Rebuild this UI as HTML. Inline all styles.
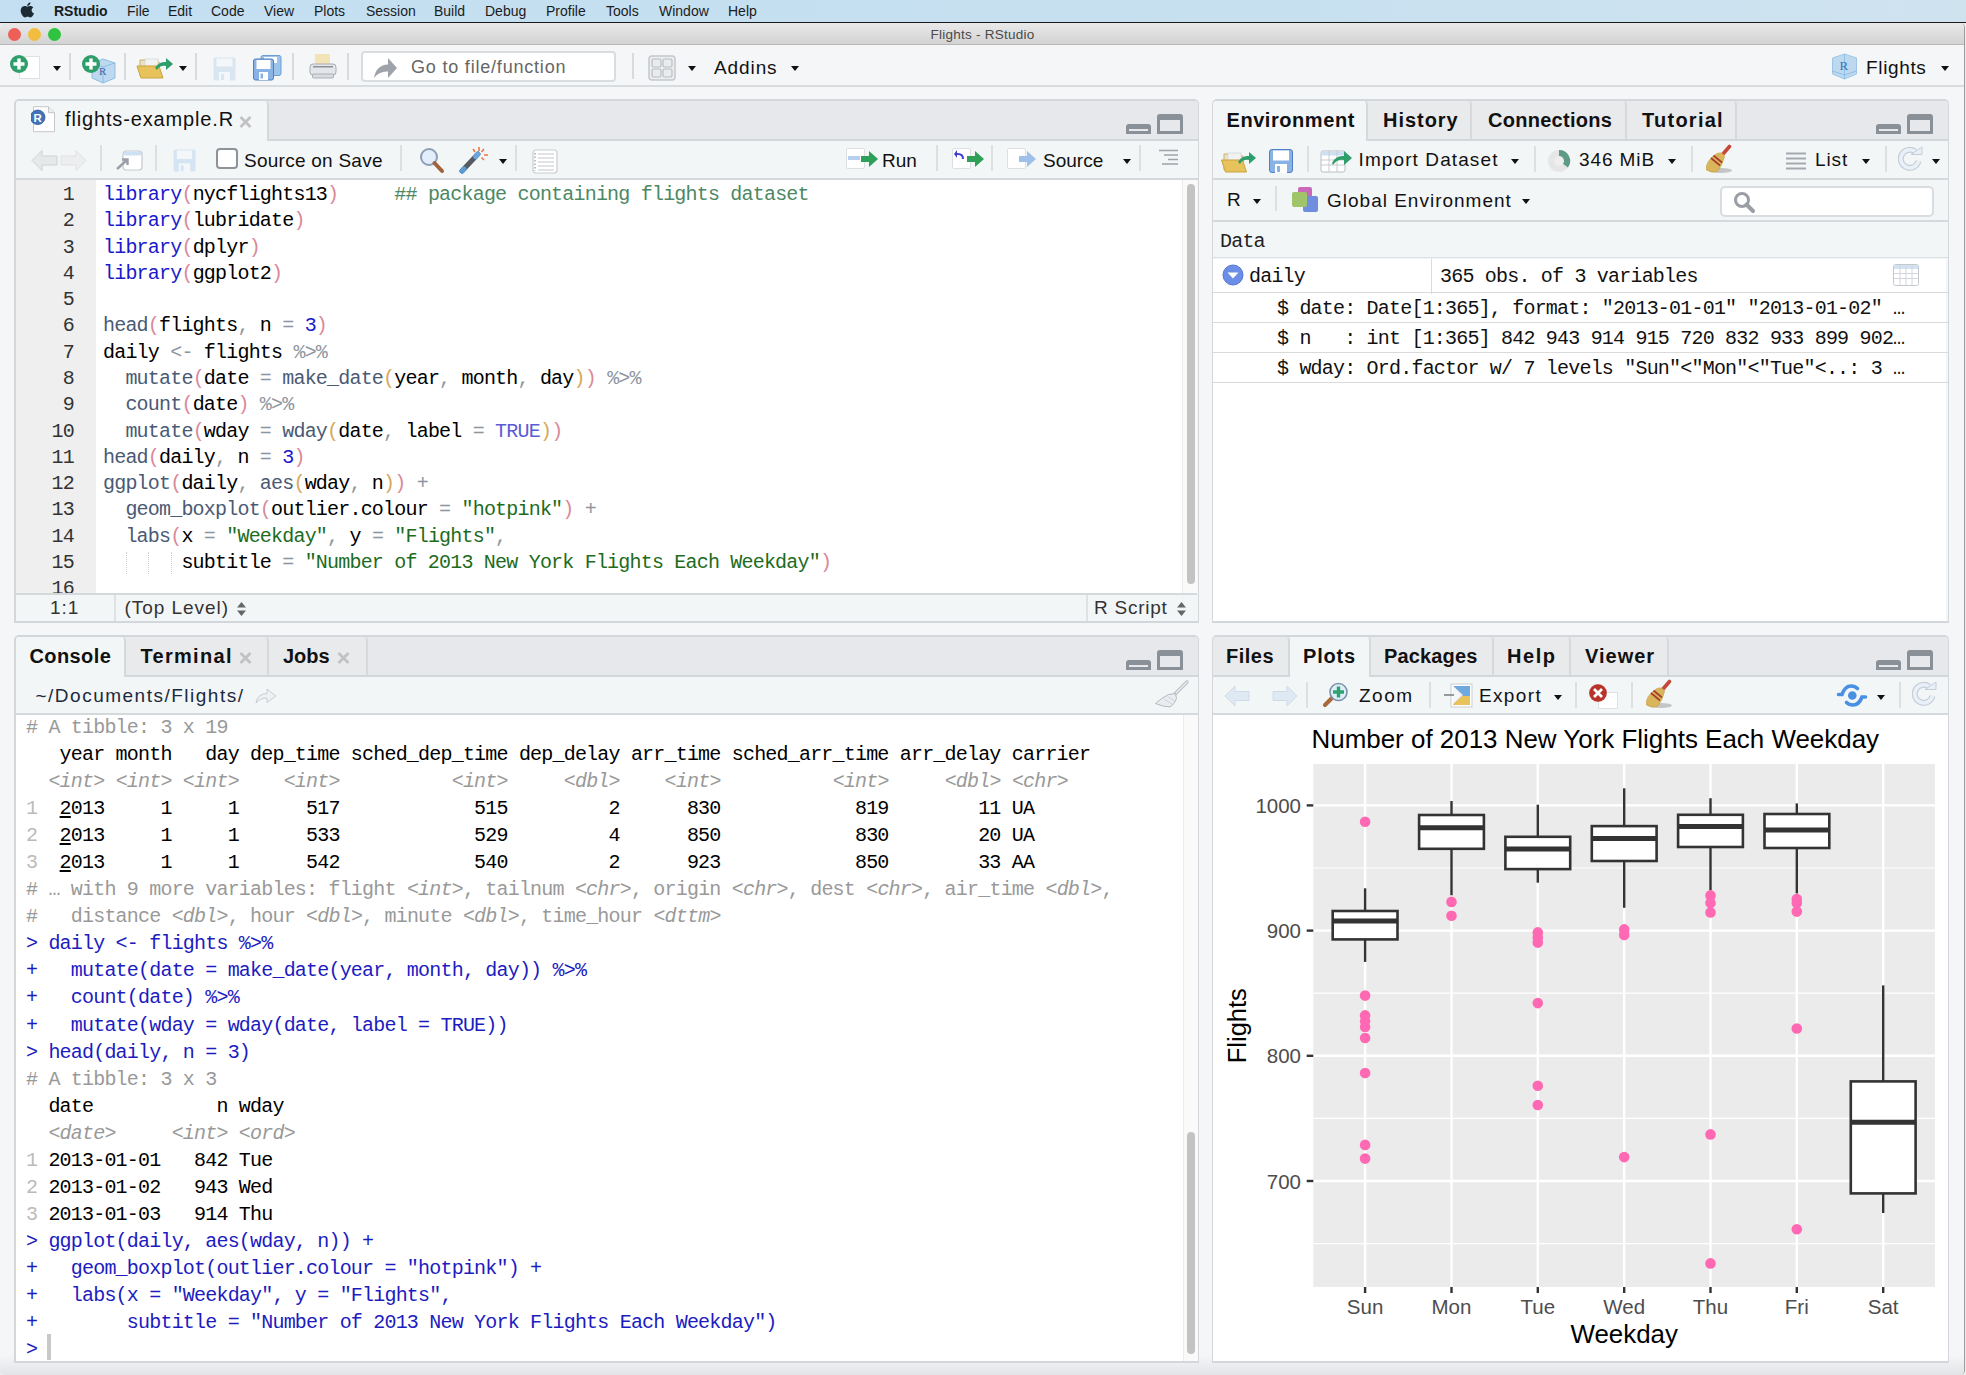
<!DOCTYPE html>
<html><head><meta charset="utf-8">
<style>
*{margin:0;padding:0;box-sizing:border-box}
html,body{width:1966px;height:1375px;overflow:hidden;background:#ececec;font-family:"Liberation Sans",sans-serif;}
.a{position:absolute}
#menubar{left:0;top:0;width:1966px;height:23px;background:linear-gradient(90deg,#c3dff1,#c6e0f0 60%,#cfe3ef);border-bottom:1px solid #1a1a1a}
#menubar span{position:absolute;top:3px;font-size:14px;color:#1b1b1b;white-space:nowrap}
#win{left:0;top:23px;width:1965px;height:1352px;background:#f5f6f8;border-radius:5px 5px 5px 5px;overflow:hidden;border-right:1px solid #9c9c9c}
#titlebar{left:0;top:0;width:1965px;height:22px;background:linear-gradient(#e9e9e9,#d3d3d3);border-bottom:1px solid #b8b8b8}
.tl{position:absolute;top:5px;width:13px;height:13px;border-radius:50%}
#toolbar{left:0;top:22px;width:1965px;height:42px;background:#f4f6f8;border-bottom:2px solid #d9dcdf}
.pane{position:absolute;border:2px solid #d3d6da;border-radius:5px 5px 0 0;background:#f3f6f7;overflow:hidden}
.tabs{position:absolute;left:0;top:0;right:0;height:39px;background:#e6e8eb;border-bottom:2px solid #d3d6da}
.tab{position:absolute;top:0;height:40px;background:#e6e8eb;border-right:2px solid #d3d6da;font-size:19px;font-weight:bold;color:#111;padding-top:8px}
.tab.act{background:#f4f6f8;height:41px;border-bottom:none}
.mono{font-family:"Liberation Mono",monospace}
.tb{position:absolute;left:0;right:0;background:#f3f6f7}
.ui{font-size:19px;color:#111;position:absolute;white-space:nowrap}
.sep{position:absolute;width:2px;height:26px;background:#dde0e3}
.dd{position:absolute;width:0;height:0;border-left:4.5px solid transparent;border-right:4.5px solid transparent;border-top:5px solid #111}
.minmax{position:absolute}

.code{position:absolute;font-family:"Liberation Mono",monospace;font-size:20px;letter-spacing:-0.8px;line-height:26.28px;white-space:pre;color:#000}
.ln{position:absolute;font-family:"Liberation Mono",monospace;font-size:20px;letter-spacing:-0.8px;line-height:26.28px;white-space:pre;color:#333;text-align:right}
.k{color:#1a1acc}.f{color:#4a5a74}.p{color:#d9899a}.p2{color:#d6a85a}.o{color:#8d96a0}.n{color:#1a1acc}.t{color:#5b5bd6}.s{color:#1d6c1d}.c{color:#4c8863}
.minb{position:absolute;width:25px;height:10px;border:3px solid #8a9097;border-top-width:5px;border-radius:3px 3px 0 0}
.maxb{position:absolute;width:26px;height:20px;border:3px solid #8a9097;border-top-width:6px;border-radius:3px 3px 0 0}

.con{position:absolute;font-family:"Liberation Mono",monospace;font-size:20px;letter-spacing:-0.8px;line-height:27.04px;white-space:pre;color:#000}
.g{color:#999}.gi{color:#999;font-style:italic}.rn{color:#bbb}.u{text-decoration:underline;text-decoration-thickness:1.5px;text-underline-offset:2px}.cm{color:#1c1cc0}
.btab{position:absolute;font-size:20px;font-weight:bold;color:#111;white-space:nowrap}
.itab{position:absolute;top:0;height:38px;background:#e9eaec;border-right:2px solid #d6d8db;border-radius:0 4px 0 0}
pre{font-family:"Liberation Mono",monospace}
</style></head><body>
<div id="menubar" class="a">
  <svg class="a" style="left:20px;top:2px" width="14" height="15.5" viewBox="0 0 14 17" preserveAspectRatio="none"><path d="M11.6 9.1c0-2 1.6-2.9 1.7-3-0.9-1.4-2.4-1.6-2.9-1.6-1.2-0.1-2.4 0.7-3 0.7-0.6 0-1.6-0.7-2.6-0.7C3.4 4.5 2.1 5.3 1.4 6.5c-1.5 2.5-0.4 6.3 1 8.4 0.7 1 1.5 2.1 2.6 2.1 1 0 1.4-0.7 2.7-0.7 1.2 0 1.6 0.7 2.7 0.6 1.1 0 1.8-1 2.5-2 0.8-1.1 1.1-2.2 1.1-2.3 0 0-2.4-0.9-2.4-3.5zM9.6 3.1c0.6-0.7 1-1.7 0.9-2.6-0.8 0-1.8 0.5-2.4 1.2-0.5 0.6-1 1.6-0.9 2.6 0.9 0.1 1.8-0.5 2.4-1.2z" fill="#1c2b33"/></svg>
  <span style="left:54px;font-weight:bold">RStudio</span>
  <span style="left:127px">File</span>
  <span style="left:168px">Edit</span>
  <span style="left:211px">Code</span>
  <span style="left:264px">View</span>
  <span style="left:314px">Plots</span>
  <span style="left:366px">Session</span>
  <span style="left:434px">Build</span>
  <span style="left:485px">Debug</span>
  <span style="left:546px">Profile</span>
  <span style="left:606px">Tools</span>
  <span style="left:659px">Window</span>
  <span style="left:728px">Help</span>
</div>
<div id="win" class="a">
  <div id="titlebar" class="a">
    <div class="tl" style="left:8px;background:#ee5f57"></div>
    <div class="tl" style="left:28px;background:#f2bd3f"></div>
    <div class="tl" style="left:48px;background:#2fc43f"></div>
    <div class="a" style="left:0;width:1965px;top:4px;text-align:center;font-size:13.5px;letter-spacing:0.25px;color:#4a4a4a">Flights - RStudio</div>
  </div>
  <div class="a" style="left:0;top:1332px;width:1965px;height:20px;background:linear-gradient(#f5f6f8,#e2e3e6)"></div>
  <div id="toolbar" class="a">
  <!-- new file -->
  <div class="a" style="left:19px;top:11px;width:21px;height:23px;background:#fff;border:1px solid #dfe2e5"></div>
  <svg class="a" style="left:9px;top:9px" width="20" height="20" viewBox="0 0 20 20"><circle cx="10" cy="10" r="9" fill="#2e9e6a"/><path d="M10 4.5v11M4.5 10h11" stroke="#fff" stroke-width="3.4"/></svg>
  <div class="dd" style="left:53px;top:43px;border-top-color:#111;top:21px"></div>
  <div class="sep" style="left:69px;top:8px;height:27px;width:2px;background:#d8dbde"></div>
  <!-- new project -->
  <svg class="a" style="left:89px;top:12px" width="28" height="28" viewBox="0 0 28 28"><path d="M3 6 L14 2 L26 6 L26 21 L14 26 L3 21Z" fill="#bcd9f0" stroke="#8fbde3" stroke-width="1"/><path d="M3 6 L14 10 L26 6 M14 10 V26" stroke="#8fbde3" fill="none" stroke-width="1"/><text x="10" y="18" font-family="Liberation Serif" font-size="11" fill="#3a66a8">R</text></svg>
  <svg class="a" style="left:81px;top:9px" width="20" height="20" viewBox="0 0 20 20"><circle cx="10" cy="10" r="9" fill="#2e9e6a"/><path d="M10 4.5v11M4.5 10h11" stroke="#fff" stroke-width="3.4"/></svg>
  <div class="sep" style="left:124px;top:8px;height:27px;background:#d8dbde"></div>
  <!-- open -->
  <svg class="a" style="left:136px;top:11px" width="38" height="24" viewBox="0 0 38 24"><path d="M4 4 h8 l2 2 h9 v14 h-19z" fill="#e9e2c9" stroke="#c9b26a" stroke-width="1"/><rect x="9" y="3" width="13" height="14" fill="#f2f2f2" stroke="#ccc" stroke-width="0.6"/><path d="M1 10 h22 l4 12 h-22z" fill="#e8c25a" stroke="#c9a33e" stroke-width="1"/><path d="M19 12 q4 -7 11 -6 v-4 l7 6 -7 6 v-4 q-6 -1 -9 4z" fill="#2e9e6a"/></svg>
  <div class="dd" style="left:179px;top:21px"></div>
  <div class="sep" style="left:195px;top:8px;height:27px;background:#d8dbde"></div>
  <!-- save (disabled) -->
  <svg class="a" style="left:213px;top:12px" width="23" height="24" viewBox="0 0 23 24"><rect x="0.5" y="0.5" width="22" height="23" rx="2" fill="#d9e6f2"/><rect x="3.5" y="1.5" width="16" height="8" fill="#f4f7fa"/><rect x="6" y="15" width="11" height="9" fill="#f4f7fa"/><rect x="8" y="17" width="3" height="6" fill="#d9e6f2"/></svg>
  <!-- save all -->
  <svg class="a" style="left:253px;top:10px" width="29" height="26" viewBox="0 0 29 26"><rect x="8" y="0.5" width="20" height="20" rx="2" fill="#9cc4ea" stroke="#6d9fd6" stroke-width="1"/><rect x="11" y="2" width="13" height="6" fill="#fff"/><rect x="0.5" y="4" width="20" height="21" rx="2" fill="#8ab3e5" stroke="#4f7fc4" stroke-width="1"/><rect x="3.5" y="5" width="14" height="9" fill="#fff"/><rect x="6" y="17" width="9" height="8" fill="#fff"/><rect x="7.5" y="18.5" width="2.5" height="5" fill="#8ab3e5"/></svg>
  <div class="sep" style="left:292px;top:8px;height:27px;background:#d8dbde"></div>
  <!-- print -->
  <svg class="a" style="left:309px;top:8px" width="28" height="26" viewBox="0 0 28 26"><rect x="6" y="1" width="15" height="12" fill="#f3e4b8"/><rect x="1" y="11" width="26" height="11" rx="3" fill="#e3e6ea" stroke="#a9adb3" stroke-width="1"/><rect x="4" y="13" width="20" height="1.5" fill="#8e9297"/><rect x="3.5" y="21" width="21" height="4" rx="1" fill="#d9dcdf" stroke="#a0a4a9" stroke-width="0.8"/></svg>
  <div class="sep" style="left:347px;top:8px;height:27px;background:#d8dbde"></div>
  <!-- go to -->
  <div class="a" style="left:361px;top:6px;width:255px;height:31px;background:#fff;border:2px solid #dadde0;border-radius:4px"></div>
  <svg class="a" style="left:374px;top:12px" width="24" height="22" viewBox="0 0 24 22"><path d="M0 21 Q2 8 14 7.5 V1 L23 11 L14 21 V14.5 Q5 14 0 21Z" fill="#9ea3ab"/></svg>
  <span class="ui" style="left:411px;top:12px;font-size:18px;color:#666;letter-spacing:0.8px">Go to file/function</span>
  <div class="sep" style="left:632px;top:8px;height:26px;background:#d8dbde"></div>
  <!-- layout -->
  <svg class="a" style="left:648px;top:10px" width="28" height="26" viewBox="0 0 28 26"><rect x="1" y="1" width="26" height="24" rx="3" fill="#eceef0" stroke="#c4c8cc" stroke-width="1.5"/><rect x="4" y="4" width="9" height="8" rx="1.5" fill="#e9ebed" stroke="#b9bdc2" stroke-width="1.2"/><rect x="15" y="4" width="9" height="8" rx="1.5" fill="#e9ebed" stroke="#b9bdc2" stroke-width="1.2"/><rect x="4" y="14" width="9" height="8" rx="1.5" fill="#e9ebed" stroke="#b9bdc2" stroke-width="1.2"/><rect x="15" y="14" width="9" height="8" rx="1.5" fill="#e9ebed" stroke="#b9bdc2" stroke-width="1.2"/></svg>
  <div class="dd" style="left:688px;top:21px"></div>
  <span class="ui" style="left:714px;top:12px;font-size:19px;letter-spacing:0.9px">Addins</span>
  <div class="dd" style="left:791px;top:21px"></div>
  <!-- project -->
  <svg class="a" style="left:1831px;top:8px" width="27" height="27" viewBox="0 0 27 27"><path d="M1.5 5 L13.5 1 L25.5 5 V21 L13.5 26 L1.5 21Z" fill="#bcd9f0" stroke="#9cc5e8" stroke-width="1"/><path d="M1.5 18 L13.5 22 L25.5 18 M13.5 1 V26" stroke="#7fb3e0" fill="none" stroke-width="0.7"/><text x="8.5" y="17" font-family="Liberation Serif" font-size="13" fill="#3a70b5">R</text></svg>
  <span class="ui" style="left:1866px;top:12px;font-size:19px;letter-spacing:0.65px">Flights</span>
  <div class="dd" style="left:1941px;top:21px"></div>
  </div>
</div>

<!-- SOURCE PANE -->
<div class="pane" style="left:14px;top:99px;width:1185px;height:524px;border-right-width:1px">
  <div class="tabs" style="height:40px"></div>
  <div class="a" style="left:0;top:0;width:253px;height:40px;background:#f3f6f7;border-right:2px solid #d6d8db;border-radius:0 4px 0 0"></div>
  <svg class="a" style="left:15px;top:5px" width="28" height="28" viewBox="0 0 28 28"><path d="M2.5 0.7h15l6 6v19h-21z" fill="#fff" stroke="#c6c6c6" stroke-width="1"/><path d="M17.5 0.7v6h6" fill="#eee" stroke="#c6c6c6" stroke-width="1"/><circle cx="6.7" cy="11.3" r="7.3" fill="#4372b8" stroke="#2f5c9e" stroke-width="0.8"/><text x="2.6" y="15.6" font-family="Liberation Sans" font-weight="bold" font-size="11.5" fill="#fff">R</text></svg>
  <span class="ui" style="left:49px;top:7px;font-size:20px;letter-spacing:0.85px">flights-example.R</span>
  <svg class="a" style="left:223px;top:15px" width="13" height="12" viewBox="0 0 13 12"><path d="M1.5 1L11.5 11M11.5 1L1.5 11" stroke="#c2c2c2" stroke-width="2.8"/></svg>
  <div class="minb" style="left:1110px;top:23px;width:25px;height:10px"></div>
  <div class="maxb" style="left:1141px;top:13px;width:26px;height:20px"></div>
  <!-- toolbar -->
  <div class="tb" style="top:41px;height:38px;border-bottom:2px solid #d6d9dc"></div>
  <svg class="a" style="left:15px;top:48px" width="56" height="23" viewBox="0 0 56 23"><path d="M1 11.5 L11 1.5 V7 H26 V16 H11 V21.5Z" fill="#e6e8ea" stroke="#cfd2d5" stroke-width="1"/><path d="M55 11.5 L45 1.5 V7 H30 V16 H45 V21.5Z" fill="#eceef0" stroke="#dfe1e3" stroke-width="1"/></svg>
  <div class="sep" style="left:84px;top:44px;height:26px"></div>
  <svg class="a" style="left:99px;top:49px" width="28" height="21" viewBox="0 0 28 21"><rect x="8" y="1" width="19" height="19" rx="3" fill="#fff" stroke="#c5c9cd" stroke-width="1.2"/><rect x="8.6" y="1.6" width="17.8" height="4" rx="2" fill="#cfe0f3"/><path d="M2 19 L12 10 M7 9.5 H12.5 V15" stroke="#9aa0a6" stroke-width="2.4" fill="none"/></svg>
  <div class="sep" style="left:139px;top:44px;height:26px"></div>
  <svg class="a" style="left:157px;top:48px" width="23" height="23" viewBox="0 0 24 24"><rect x="0.5" y="0.5" width="23" height="23" rx="2" fill="#d5e4f2"/><rect x="4" y="1.5" width="16" height="9" fill="#f4f7fa"/><rect x="6" y="15" width="12" height="9" fill="#f4f7fa"/><rect x="8" y="17" width="3" height="6" fill="#d5e4f2"/></svg>
  <div class="a" style="left:200px;top:47px;width:22px;height:21px;border:2px solid #8e9399;border-radius:4px;background:#fff"></div>
  <span class="ui" style="left:228px;top:49px;font-size:19px;letter-spacing:0.25px">Source on Save</span>
  <div class="sep" style="left:384px;top:44px;height:26px"></div>
  <svg class="a" style="left:403px;top:46px" width="26" height="27" viewBox="0 0 26 27"><circle cx="10" cy="10" r="8" fill="#e3eefb" stroke="#8c9fb5" stroke-width="2"/><path d="M15.5 16 L23 24" stroke="#a0623a" stroke-width="4" stroke-linecap="round"/></svg>
  <svg class="a" style="left:443px;top:44px" width="33" height="29" viewBox="0 0 33 29"><path d="M3 26 L19 9" stroke="#555b62" stroke-width="5" stroke-linecap="round"/><path d="M16.5 11.5 L19 9" stroke="#6aa6de" stroke-width="5" stroke-linecap="round"/><path d="M3 26 L5 24" stroke="#5b9bd6" stroke-width="5" stroke-linecap="round"/><path d="M20 2v4M25 4l-2.5 3M29 10h-4M25 15l-2.5-2.5M14 4l2 3" stroke="#e8774a" stroke-width="1.6"/></svg>
  <div class="dd" style="left:483px;top:58px"></div>
  <div class="sep" style="left:499px;top:44px;height:26px"></div>
  <svg class="a" style="left:516px;top:48px" width="26" height="25" viewBox="0 0 26 25"><rect x="1" y="1" width="24" height="23" rx="3" fill="#fff" stroke="#c9ccd0" stroke-width="1.2"/><path d="M6 5h16M6 9h16M6 13h16M6 17h16M6 21h16" stroke="#c2c6cb" stroke-width="1"/><path d="M3 4v18" stroke="#a9aeb4" stroke-width="1.5" stroke-dasharray="1.5 2"/></svg>
  <!-- Run -->
  <div class="a" style="left:830px;top:47px;width:19px;height:21px;background:#fff;border:1px solid #dde0e3;border-radius:2px"></div>
  <div class="a" style="left:832px;top:55px;width:12px;height:4px;background:#b8cff0"></div>
  <svg class="a" style="left:845px;top:50px" width="18" height="16" viewBox="0 0 18 16"><path d="M0 5H8V0L17 8L8 16V11H0Z" fill="#2ea05a"/></svg>
  <span class="ui" style="left:866px;top:49px;font-size:19px">Run</span>
  <div class="sep" style="left:920px;top:44px;height:26px"></div>
  <div class="a" style="left:936px;top:47px;width:19px;height:21px;background:#fff;border:1px solid #dde0e3;border-radius:2px"></div>
  <svg class="a" style="left:938px;top:48px" width="12" height="12" viewBox="0 0 12 12"><path d="M10 10 Q10 4 4 4 H3 V1 L0 5 L3 9 V6 H4 Q8 6 8 10Z" fill="#3f3fcf"/></svg>
  <svg class="a" style="left:951px;top:50px" width="18" height="16" viewBox="0 0 18 16"><path d="M0 5H8V0L17 8L8 16V11H0Z" fill="#2ea05a"/></svg>
  <div class="sep" style="left:975px;top:44px;height:26px"></div>
  <div class="a" style="left:991px;top:47px;width:19px;height:21px;background:#fff;border:1px solid #dde0e3;border-radius:2px"></div>
  <svg class="a" style="left:1003px;top:50px" width="18" height="16" viewBox="0 0 18 16"><path d="M0 5H8V0L17 8L8 16V11H0Z" fill="#9fc0ea"/></svg>
  <span class="ui" style="left:1027px;top:49px;font-size:19px">Source</span>
  <div class="dd" style="left:1107px;top:58px"></div>
  <div class="sep" style="left:1123px;top:44px;height:26px"></div>
  <svg class="a" style="left:1143px;top:48px" width="20" height="18" viewBox="0 0 20 18"><path d="M0 1.5H19M5 6H19M9 10.5H19M3 15H19" stroke="#9ea3a9" stroke-width="1.6"/></svg>
  <!-- editor -->
  <div class="a" style="left:0;top:79px;width:1181px;height:413px;background:#fff"></div>
  <div class="a" style="left:0;top:79px;width:80px;height:413px;background:#efefef"></div>
  <div class="ln" style="left:0;top:81px;width:58px">1
2
3
4
5
6
7
8
9
10
11
12
13
14
15
16</div>
  <div class="code" style="left:87px;top:81px"><span class="k">library</span><span class="p">(</span>nycflights13<span class="p">)</span>     <span class="c">## package containing flights dataset</span>
<span class="k">library</span><span class="p">(</span>lubridate<span class="p">)</span>
<span class="k">library</span><span class="p">(</span>dplyr<span class="p">)</span>
<span class="k">library</span><span class="p">(</span>ggplot2<span class="p">)</span>

<span class="f">head</span><span class="p">(</span>flights<span class="o">,</span> n <span class="o">=</span> <span class="n">3</span><span class="p">)</span>
daily <span class="o">&lt;-</span> flights <span class="o">%&gt;%</span>
  <span class="f">mutate</span><span class="p">(</span>date <span class="o">=</span> <span class="f">make_date</span><span class="p2">(</span>year<span class="o">,</span> month<span class="o">,</span> day<span class="p2">)</span><span class="p">)</span> <span class="o">%&gt;%</span>
  <span class="f">count</span><span class="p">(</span>date<span class="p">)</span> <span class="o">%&gt;%</span>
  <span class="f">mutate</span><span class="p">(</span>wday <span class="o">=</span> <span class="f">wday</span><span class="p2">(</span>date<span class="o">,</span> label <span class="o">=</span> <span class="t">TRUE</span><span class="p2">)</span><span class="p">)</span>
<span class="f">head</span><span class="p">(</span>daily<span class="o">,</span> n <span class="o">=</span> <span class="n">3</span><span class="p">)</span>
<span class="f">ggplot</span><span class="p">(</span>daily<span class="o">,</span> <span class="f">aes</span><span class="p2">(</span>wday<span class="o">,</span> n<span class="p2">)</span><span class="p">)</span> <span class="o">+</span>
  <span class="f">geom_boxplot</span><span class="p">(</span>outlier.colour <span class="o">=</span> <span class="s">"hotpink"</span><span class="p">)</span> <span class="o">+</span>
  <span class="f">labs</span><span class="p">(</span>x <span class="o">=</span> <span class="s">"Weekday"</span><span class="o">,</span> y <span class="o">=</span> <span class="s">"Flights"</span><span class="o">,</span>
       subtitle <span class="o">=</span> <span class="s">"Number of 2013 New York Flights Each Weekday"</span><span class="p">)</span>
</div>
  <div class="a" style="left:110px;top:451px;height:22px;border-left:1px dotted #d0d0d0"></div>
  <div class="a" style="left:132px;top:451px;height:22px;border-left:1px dotted #d0d0d0"></div>
  <div class="a" style="left:155px;top:451px;height:22px;border-left:1px dotted #d0d0d0"></div>
  <!-- scrollbar -->
  <div class="a" style="left:1166px;top:79px;width:15px;height:414px;background:#fafafa;border-left:1px solid #ececec"></div>
  <div class="a" style="left:1171px;top:83px;width:8px;height:400px;background:#c3c3c3;border-radius:4px"></div>
  <!-- status -->
  <div class="a" style="left:0;top:492px;width:1181px;height:2px;background:#d6d9dc"></div>
  <span class="ui" style="left:34px;top:496px;font-size:19px;color:#333;letter-spacing:0.9px">1:1</span>
  <div class="a" style="left:98px;top:494px;width:2px;height:28px;background:#dfe2e5"></div>
  <span class="ui" style="left:108.5px;top:496px;font-size:19px;color:#333;letter-spacing:0.95px">(Top Level)</span>
  <svg class="a" style="left:220px;top:500px" width="11" height="16" viewBox="0 0 11 16"><path d="M1 6.5L5.5 1L10 6.5ZM1 9.5L5.5 15L10 9.5Z" fill="#666"/></svg>
  <div class="a" style="left:1070px;top:494px;width:2px;height:28px;background:#dfe2e5"></div>
  <span class="ui" style="left:1078px;top:496px;font-size:19px;color:#333;letter-spacing:0.75px">R Script</span>
  <svg class="a" style="left:1160px;top:500px" width="11" height="16" viewBox="0 0 11 16"><path d="M1 6.5L5.5 1L10 6.5ZM1 9.5L5.5 15L10 9.5Z" fill="#666"/></svg>
</div>
<!-- CONSOLE PANE -->
<div class="pane" style="left:14px;top:635px;width:1185px;height:728px;border-right-width:1px">
  <div class="tabs" style="height:40px"></div>
  <div class="a" style="left:0;top:0;width:110px;height:40px;background:#f3f6f7;border-right:2px solid #d6d8db;border-radius:0 4px 0 0"></div>
  <div class="itab" style="left:110px;width:143px"></div>
  <div class="itab" style="left:253px;width:99px"></div>
  <span class="btab" style="left:13.5px;top:8px;letter-spacing:0.4px">Console</span>
  <span class="btab" style="left:124.5px;top:8px;letter-spacing:1.3px">Terminal</span>
  <svg class="a" style="left:223px;top:15px" width="13" height="12" viewBox="0 0 13 12"><path d="M1.5 1L11.5 11M11.5 1L1.5 11" stroke="#c2c2c2" stroke-width="2.8"/></svg>
  <span class="btab" style="left:267px;top:8px;letter-spacing:0px">Jobs</span>
  <svg class="a" style="left:321px;top:15px" width="13" height="12" viewBox="0 0 13 12"><path d="M1.5 1L11.5 11M11.5 1L1.5 11" stroke="#c2c2c2" stroke-width="2.8"/></svg>
  <div class="minb" style="left:1110px;top:23px;width:25px;height:10px"></div>
  <div class="maxb" style="left:1141px;top:13px;width:26px;height:20px"></div>
  <!-- path bar -->
  <span class="ui" style="left:19.5px;top:48px;font-size:19px;color:#1b2a3e;letter-spacing:1.5px">~/Documents/Flights/</span>
  <svg class="a" style="left:239px;top:51px" width="22" height="16" viewBox="0 0 22 16"><path d="M1 15 Q2 6 12 5.5 V1 L21 8 L12 14.5 V10 Q5 10 1 15Z" fill="#eef0f3" stroke="#c8cdd3" stroke-width="1"/></svg>
  <svg class="a" style="left:1134px;top:41px" width="40" height="32" viewBox="0 0 40 32"><path d="M37 4 L25.5 15.5" stroke="#b3b8be" stroke-width="3.2" stroke-linecap="round"/><path d="M37 4 L25.5 15.5" stroke="#f1f3f6" stroke-width="1.3" stroke-linecap="round"/><path d="M18.5 16.5 L25.5 15.5 L26.5 20.5 Q24.5 26.5 20 29 Q12 28.5 5.5 25.5 Q12 19.5 18.5 16.5Z" fill="#e9ecf0" stroke="#aeb3b9" stroke-width="0.9"/><path d="M14 21 L22 26 M17.5 18.5 L24.5 23" stroke="#c9cdd2" stroke-width="0.8"/></svg>
  <div class="a" style="left:0;top:76px;width:1182px;height:2px;background:#d6d9dc"></div>
  <!-- body -->
  <div class="a" style="left:0;top:78px;width:1182px;height:648px;background:#fff"></div>
  <div class="con" style="left:10px;top:77px"><span class="g"># A tibble: 3 x 19</span>
   year month   day dep_time sched_dep_time dep_delay arr_time sched_arr_time arr_delay carrier
  <span class="gi">&lt;int&gt;</span> <span class="gi">&lt;int&gt;</span> <span class="gi">&lt;int&gt;</span>    <span class="gi">&lt;int&gt;</span>          <span class="gi">&lt;int&gt;</span>     <span class="gi">&lt;dbl&gt;</span>    <span class="gi">&lt;int&gt;</span>          <span class="gi">&lt;int&gt;</span>     <span class="gi">&lt;dbl&gt;</span> <span class="gi">&lt;chr&gt;</span>
<span class="rn">1</span>  <span class="u">2</span>013     1     1      517            515         2      830            819        11 UA
<span class="rn">2</span>  <span class="u">2</span>013     1     1      533            529         4      850            830        20 UA
<span class="rn">3</span>  <span class="u">2</span>013     1     1      542            540         2      923            850        33 AA
<span class="g"># … with 9 more variables: flight <i>&lt;int&gt;</i>, tailnum <i>&lt;chr&gt;</i>, origin <i>&lt;chr&gt;</i>, dest <i>&lt;chr&gt;</i>, air_time <i>&lt;dbl&gt;</i>,</span>
<span class="g">#   distance <i>&lt;dbl&gt;</i>, hour <i>&lt;dbl&gt;</i>, minute <i>&lt;dbl&gt;</i>, time_hour <i>&lt;dttm&gt;</i></span>
<span class="cm">&gt; daily &lt;- flights %&gt;%</span>
<span class="cm">+   mutate(date = make_date(year, month, day)) %&gt;%</span>
<span class="cm">+   count(date) %&gt;%</span>
<span class="cm">+   mutate(wday = wday(date, label = TRUE))</span>
<span class="cm">&gt; head(daily, n = 3)</span>
<span class="g"># A tibble: 3 x 3</span>
  date           n wday
  <span class="gi">&lt;date&gt;</span>     <span class="gi">&lt;int&gt;</span> <span class="gi">&lt;ord&gt;</span>
<span class="rn">1</span> 2013-01-01   842 Tue
<span class="rn">2</span> 2013-01-02   943 Wed
<span class="rn">3</span> 2013-01-03   914 Thu
<span class="cm">&gt; ggplot(daily, aes(wday, n)) +</span>
<span class="cm">+   geom_boxplot(outlier.colour = "hotpink") +</span>
<span class="cm">+   labs(x = "Weekday", y = "Flights",</span>
<span class="cm">+        subtitle = "Number of 2013 New York Flights Each Weekday")</span>
<span class="cm">&gt; </span></div>
  <div class="a" style="left:31px;top:697px;width:4px;height:26px;background:#c8c8c8"></div>
  <!-- scrollbar -->
  <div class="a" style="left:1167px;top:78px;width:15px;height:648px;background:#fafafa;border-left:1px solid #ececec"></div>
  <div class="a" style="left:1171px;top:495px;width:8px;height:222px;background:#c3c3c3;border-radius:4px"></div>
</div>
<!-- ENV PANE -->
<div class="pane" style="left:1212px;top:99px;width:737px;height:524px;border-left-width:1px;border-right-width:1px">
  <div class="tabs" style="height:40px"></div>
  <div class="a" style="left:0;top:0;width:155px;height:40px;background:#f3f6f7;border-right:2px solid #d6d8db;border-radius:0 4px 0 0"></div>
  <div class="itab" style="left:155px;width:104px"></div>
  <div class="itab" style="left:259px;width:155px"></div>
  <div class="itab" style="left:414px;width:110px"></div>
  <span class="btab" style="left:13.5px;top:8px;letter-spacing:0.56px">Environment</span>
  <span class="btab" style="left:170px;top:8px;letter-spacing:0.97px">History</span>
  <span class="btab" style="left:275px;top:8px;letter-spacing:0.27px">Connections</span>
  <span class="btab" style="left:429px;top:8px;letter-spacing:1.26px">Tutorial</span>
  <div class="minb" style="left:663px;top:23px;width:25px;height:10px"></div>
  <div class="maxb" style="left:694px;top:13px;width:26px;height:20px"></div>
  <!-- toolbar 1 -->
  <div class="tb" style="top:40px;height:39px;border-bottom:2px solid #d6d9dc"></div>
  <svg class="a" style="left:8px;top:49px" width="36" height="24" viewBox="0 0 36 24"><path d="M3 4 h8 l2 2 h9 v14 h-19z" fill="#e9e2c9" stroke="#c9b26a" stroke-width="1"/><rect x="7" y="3" width="13" height="14" fill="#f2f2f2" stroke="#ccc" stroke-width="0.6"/><path d="M0.5 10 h21 l4 12 h-21z" fill="#e8c25a" stroke="#c9a33e" stroke-width="1"/><path d="M17 12 q4 -7 11 -6 v-4 l7 6 -7 6 v-4 q-6 -1 -9 4z" fill="#2e9e6a"/></svg>
  <svg class="a" style="left:56px;top:48px" width="24" height="24" viewBox="0 0 24 24"><rect x="0.5" y="0.5" width="23" height="23" rx="2.5" fill="#8ab3e5" stroke="#4f7fc4" stroke-width="1"/><rect x="4" y="1.5" width="16" height="10" fill="#fff"/><rect x="6" y="15" width="12" height="9" fill="#fff"/><rect x="8" y="17" width="3" height="6" fill="#8ab3e5"/></svg>
  <div class="sep" style="left:94px;top:45px;height:26px"></div>
  <svg class="a" style="left:107px;top:47px" width="36" height="25" viewBox="0 0 36 25"><rect x="1" y="3" width="24" height="21" rx="2" fill="#fff" stroke="#b9bec4" stroke-width="1"/><rect x="1.5" y="3.5" width="23" height="4" fill="#cfe0f3"/><path d="M1 12h24M1 17h24M9 3v21M17 3v21" stroke="#c6cbd1" stroke-width="1"/><path d="M12 15 q4 -8 12 -7 v-5 l8 7 -8 7 v-5 q-7 -1 -11 5z" fill="#2e9e6a"/></svg>
  <span class="ui" style="left:145.5px;top:48px;font-size:19px;letter-spacing:1.1px">Import Dataset</span>
  <div class="dd" style="left:298px;top:58px"></div>
  <div class="sep" style="left:321px;top:45px;height:26px"></div>
  <svg class="a" style="left:334px;top:48px" width="24" height="24" viewBox="0 0 24 24"><circle cx="12" cy="12" r="11" fill="#e6e6e6"/><path d="M12 12 L12 1 A11 11 0 0 1 21 18.5 Z" fill="#5d9a88"/><circle cx="12" cy="12" r="5" fill="#eeeeee"/></svg>
  <span class="ui" style="left:366px;top:48px;font-size:19px;letter-spacing:0.9px">346 MiB</span>
  <div class="dd" style="left:455px;top:58px"></div>
  <div class="sep" style="left:478px;top:45px;height:26px"></div>
  <svg class="a" style="left:489px;top:43px" width="32" height="30" viewBox="0 0 32 30"><ellipse cx="19" cy="26.5" rx="11" ry="2.6" fill="#9a9ca0" opacity="0.55"/><path d="M27.5 2.5 L21 10" stroke="#c4493a" stroke-width="3.6" stroke-linecap="round"/><path d="M15 9.5 Q21 7.5 22.5 12.5 Q20 22 15.5 27.5 Q10 29.5 4.5 26 Q3 17 15 9.5Z" fill="#d9b65c" stroke="#c9a146" stroke-width="0.7"/><path d="M11.5 11.5 L20 18.5 M9 14 L18 21.5" stroke="#a83d2c" stroke-width="1.7"/></svg>
  <svg class="a" style="left:573px;top:51px" width="20" height="18" viewBox="0 0 20 18"><path d="M0 1.5H20M0 6.5H20M0 11.5H20M0 16.5H20" stroke="#a5aab0" stroke-width="2"/></svg>
  <span class="ui" style="left:602px;top:48px;font-size:19px;letter-spacing:0.9px">List</span>
  <div class="dd" style="left:649px;top:58px"></div>
  <div class="sep" style="left:672px;top:45px;height:26px"></div>
  <svg class="a" style="left:685px;top:45px" width="26" height="27" viewBox="0 0 26 27"><path d="M20.5 15 A9 9 0 1 1 17 5.5" fill="none" stroke="#c4cdd8" stroke-width="6"/><path d="M20.5 15 A9 9 0 1 1 17 5.5" fill="none" stroke="#eaf0f8" stroke-width="3.6"/><path d="M13 8.5 L24 8.5 L24 1 Z" fill="#eaf0f8" stroke="#c4cdd8" stroke-width="1"/></svg>
  <div class="dd" style="left:719px;top:58px"></div>
  <!-- toolbar 2 -->
  <div class="tb" style="top:81px;height:40px;border-bottom:2px solid #d6d9dc"></div>
  <span class="ui" style="left:14px;top:88px;font-size:19px;letter-spacing:0.3px">R</span>
  <div class="dd" style="left:40px;top:98px"></div>
  <div class="sep" style="left:62px;top:85px;height:25px"></div>
  <svg class="a" style="left:78px;top:85px" width="28" height="27" viewBox="0 0 28 27"><rect x="7" y="1" width="14" height="17" rx="2" fill="#c86ab8"/><rect x="12" y="10" width="15" height="16" rx="2" fill="#6f8ee0"/><rect x="1" y="6" width="15" height="15" rx="2" fill="#9fc46a"/></svg>
  <span class="ui" style="left:114px;top:89px;font-size:19px;letter-spacing:1.0px">Global Environment</span>
  <div class="dd" style="left:309px;top:98px"></div>
  <div class="a" style="left:507px;top:85px;width:214px;height:31px;background:#fff;border:2px solid #d9dce0;border-radius:5px"></div>
  <svg class="a" style="left:520px;top:90px" width="23" height="23" viewBox="0 0 23 23"><circle cx="9" cy="9" r="6.5" fill="none" stroke="#9a9ea4" stroke-width="3"/><path d="M13.5 13.5 L20 20" stroke="#9a9ea4" stroke-width="4" stroke-linecap="round"/></svg>
  <!-- data header -->
  <div class="a" style="left:0;top:121px;width:735px;height:36px;background:#f3f6f7;border-bottom:1px solid #dcdfe2"></div>
  <span class="a mono" style="left:7px;top:129px;font-size:20px;letter-spacing:-0.8px;color:#222">Data</span>
  <!-- rows -->
  <div class="a" style="left:0;top:158px;width:733px;height:364px;background:#fff"></div>
  <div class="a" style="left:0;top:157px;width:735px;height:35px;border-bottom:1px solid #dadada"></div>
  <div class="a" style="left:218px;top:158px;width:1px;height:35px;background:#dadada"></div>
  <svg class="a" style="left:9px;top:163px" width="22" height="22" viewBox="0 0 22 22"><circle cx="11" cy="11" r="10" fill="#6d8ee6" stroke="#5577d2" stroke-width="1"/><path d="M5.5 8.5 H16.5 L11 14.5Z" fill="#fff"/></svg>
  <span class="a mono" style="left:36px;top:164px;font-size:20px;letter-spacing:-0.8px;color:#111">daily</span>
  <span class="a mono" style="left:227px;top:164px;font-size:20px;letter-spacing:-0.8px;color:#111">365 obs. of 3 variables</span>
  <svg class="a" style="left:680px;top:163px" width="26" height="22" viewBox="0 0 26 22"><rect x="0.5" y="0.5" width="25" height="21" rx="2" fill="#fff" stroke="#c3c8ce" stroke-width="1"/><rect x="1" y="1" width="24" height="4" fill="#d3e3f4"/><path d="M1 9.5h24M1 14.5h24M7 1v20M13 1v20M19 1v20" stroke="#d2d6db" stroke-width="1"/></svg>
  <div class="a" style="left:0;top:192px;width:735px;height:30.05px;border-bottom:1px solid #dadada"></div>
  <div class="a" style="left:0;top:222.05px;width:735px;height:30.05px;border-bottom:1px solid #dadada"></div>
  <div class="a" style="left:0;top:252.1px;width:735px;height:30.05px;border-bottom:1px solid #dadada"></div>
  <div class="a mono" style="left:64px;top:193px;font-size:20px;letter-spacing:-0.8px;line-height:30.05px;color:#111;white-space:pre">$ date: Date[1:365], format: "2013-01-01" "2013-01-02" …
$ n   : int [1:365] 842 943 914 915 720 832 933 899 902…
$ wday: Ord.factor w/ 7 levels "Sun"&lt;"Mon"&lt;"Tue"&lt;..: 3 …</div>
</div>
<!-- PLOTS PANE -->
<div class="pane" style="left:1212px;top:635px;width:737px;height:728px;border-left-width:1px;border-right-width:1px">
  <div class="tabs" style="height:40px"></div>
  <div class="itab" style="left:0;width:77px"></div>
  <div class="a" style="left:77px;top:0;width:81px;height:40px;background:#f3f6f7;border-right:2px solid #d6d8db;border-radius:0 4px 0 0"></div>
  <div class="itab" style="left:158px;width:123px"></div>
  <div class="itab" style="left:281px;width:77px"></div>
  <div class="itab" style="left:358px;width:98px"></div>
  <span class="btab" style="left:13px;top:8px;letter-spacing:0.5px">Files</span>
  <span class="btab" style="left:90px;top:8px;letter-spacing:0.8px">Plots</span>
  <span class="btab" style="left:171px;top:8px;letter-spacing:0.15px">Packages</span>
  <span class="btab" style="left:294px;top:8px;letter-spacing:1.57px">Help</span>
  <span class="btab" style="left:372px;top:8px;letter-spacing:1.0px">Viewer</span>
  <div class="minb" style="left:663px;top:23px;width:25px;height:10px"></div>
  <div class="maxb" style="left:694px;top:13px;width:26px;height:20px"></div>
  <div class="tb" style="top:40px;height:38px;border-bottom:2px solid #d6d9dc"></div>
  <svg class="a" style="left:11px;top:48px" width="74" height="22" viewBox="0 0 74 22"><path d="M1 11 L11 1 V6.5 H25 V15.5 H11 V21Z" fill="#dfe9f4" stroke="#d0dbe8" stroke-width="1"/><path d="M73 11 L63 1 V6.5 H49 V15.5 H63 V21Z" fill="#dfe9f4" stroke="#d0dbe8" stroke-width="1"/></svg>
  <div class="sep" style="left:93px;top:45px;height:26px"></div>
  <svg class="a" style="left:109px;top:45px" width="27" height="26" viewBox="0 0 27 26"><path d="M3 23 L10 16" stroke="#a8683a" stroke-width="4" stroke-linecap="round"/><circle cx="16.5" cy="10" r="8.5" fill="#dfeefa" stroke="#7e93a8" stroke-width="1.6"/><path d="M16.5 4.5v11M11 10h11" stroke="#2ea370" stroke-width="3.4"/></svg>
  <span class="ui" style="left:146px;top:48px;font-size:19px;letter-spacing:1.5px">Zoom</span>
  <div class="sep" style="left:216px;top:45px;height:26px"></div>
  <svg class="a" style="left:230px;top:46px" width="30" height="25" viewBox="0 0 30 25"><rect x="8" y="1" width="21" height="23" fill="#fff" stroke="#c9cdd2" stroke-width="1"/><rect x="10" y="3" width="17" height="10" fill="#6fa8dc"/><rect x="10" y="13" width="17" height="9" fill="#e8c25a"/><path d="M10 3 L20 12 L10 21" fill="#f4f6f8"/><path d="M1 12H11" stroke="#999" stroke-width="2"/><path d="M10 3 L19 12 L10 21" fill="none" stroke="#e4e4e4" stroke-width="1"/></svg>
  <span class="ui" style="left:266px;top:48px;font-size:19px;letter-spacing:1.35px">Export</span>
  <div class="dd" style="left:341px;top:58px"></div>
  <div class="sep" style="left:362px;top:45px;height:26px"></div>
  <div class="a" style="left:385px;top:55px;width:20px;height:17px;background:#fff;border:1px solid #dfe2e5"></div>
  <svg class="a" style="left:375px;top:46px" width="20" height="20" viewBox="0 0 20 20"><circle cx="10" cy="10" r="9" fill="#b8332a"/><circle cx="10" cy="10" r="9" fill="none" stroke="#fff" stroke-width="0.8" opacity="0.3"/><path d="M6 6L14 14M14 6L6 14" stroke="#fff" stroke-width="2.8"/></svg>
  <div class="sep" style="left:418px;top:45px;height:26px"></div>
  <svg class="a" style="left:429px;top:42px" width="32" height="30" viewBox="0 0 32 30"><ellipse cx="19" cy="26.5" rx="11" ry="2.6" fill="#9a9ca0" opacity="0.55"/><path d="M27.5 2.5 L21 10" stroke="#c4493a" stroke-width="3.6" stroke-linecap="round"/><path d="M15 9.5 Q21 7.5 22.5 12.5 Q20 22 15.5 27.5 Q10 29.5 4.5 26 Q3 17 15 9.5Z" fill="#d9b65c" stroke="#c9a146" stroke-width="0.7"/><path d="M11.5 11.5 L20 18.5 M9 14 L18 21.5" stroke="#a83d2c" stroke-width="1.7"/></svg>
  <svg class="a" style="left:617px;top:39px" width="40" height="38" viewBox="0 0 40 38"><path d="M8.5 18.5 H12 Q15 10 21 10 Q25 10 27.5 12.5" fill="none" stroke="#4a90e2" stroke-width="3.6" stroke-linecap="round"/><path d="M35.5 21 H32 Q29 29 23 29 Q19 29 16.5 26.5" fill="none" stroke="#4a90e2" stroke-width="3.6" stroke-linecap="round"/><circle cx="22.3" cy="19.5" r="4.3" fill="#4a90e2"/></svg>
  <div class="dd" style="left:664px;top:58px"></div>
  <div class="sep" style="left:686px;top:45px;height:26px"></div>
  <svg class="a" style="left:699px;top:44px" width="26" height="27" viewBox="0 0 26 27"><path d="M20.5 15 A9 9 0 1 1 17 5.5" fill="none" stroke="#c4cdd8" stroke-width="6"/><path d="M20.5 15 A9 9 0 1 1 17 5.5" fill="none" stroke="#eaf0f8" stroke-width="3.6"/><path d="M13 8.5 L24 8.5 L24 1 Z" fill="#eaf0f8" stroke="#c4cdd8" stroke-width="1"/></svg>
  <svg class="a" style="left:0;top:78px" width="735" height="646" viewBox="0 0 735 646">
<rect x="0" y="0" width="735" height="646" fill="#fff"/>
<rect x="100.3" y="49" width="621.7" height="523" fill="#ebebeb"/>
<line x1="100.3" x2="722.0" y1="528.6" y2="528.6" stroke="#fff" stroke-width="1.2"/>
<line x1="100.3" x2="722.0" y1="403.4" y2="403.4" stroke="#fff" stroke-width="1.2"/>
<line x1="100.3" x2="722.0" y1="278.2" y2="278.2" stroke="#fff" stroke-width="1.2"/>
<line x1="100.3" x2="722.0" y1="153.0" y2="153.0" stroke="#fff" stroke-width="1.2"/>
<line x1="100.3" x2="722.0" y1="466.0" y2="466.0" stroke="#fff" stroke-width="2.4"/>
<line x1="100.3" x2="722.0" y1="340.8" y2="340.8" stroke="#fff" stroke-width="2.4"/>
<line x1="100.3" x2="722.0" y1="215.6" y2="215.6" stroke="#fff" stroke-width="2.4"/>
<line x1="100.3" x2="722.0" y1="90.4" y2="90.4" stroke="#fff" stroke-width="2.4"/>
<line x1="152.1" x2="152.1" y1="49" y2="572" stroke="#fff" stroke-width="2.4"/>
<line x1="238.5" x2="238.5" y1="49" y2="572" stroke="#fff" stroke-width="2.4"/>
<line x1="324.8" x2="324.8" y1="49" y2="572" stroke="#fff" stroke-width="2.4"/>
<line x1="411.2" x2="411.2" y1="49" y2="572" stroke="#fff" stroke-width="2.4"/>
<line x1="497.5" x2="497.5" y1="49" y2="572" stroke="#fff" stroke-width="2.4"/>
<line x1="583.8" x2="583.8" y1="49" y2="572" stroke="#fff" stroke-width="2.4"/>
<line x1="670.2" x2="670.2" y1="49" y2="572" stroke="#fff" stroke-width="2.4"/>
<line x1="152.1" x2="152.1" y1="173.3" y2="196.0" stroke="#333" stroke-width="2.4"/>
<line x1="152.1" x2="152.1" y1="224.4" y2="246.9" stroke="#333" stroke-width="2.4"/>
<rect x="119.7" y="196.0" width="64.8" height="28.4" fill="#fff" stroke="#333" stroke-width="2.6"/>
<line x1="119.7" x2="184.5" y1="206.0" y2="206.0" stroke="#333" stroke-width="5"/>
<circle cx="152.1" cy="106.8" r="5.3" fill="#ff69b4"/>
<circle cx="152.1" cy="280.6" r="5.3" fill="#ff69b4"/>
<circle cx="152.1" cy="300.4" r="5.3" fill="#ff69b4"/>
<circle cx="152.1" cy="306.2" r="5.3" fill="#ff69b4"/>
<circle cx="152.1" cy="312.0" r="5.3" fill="#ff69b4"/>
<circle cx="152.1" cy="323.0" r="5.3" fill="#ff69b4"/>
<circle cx="152.1" cy="358.0" r="5.3" fill="#ff69b4"/>
<circle cx="152.1" cy="429.9" r="5.3" fill="#ff69b4"/>
<circle cx="152.1" cy="443.6" r="5.3" fill="#ff69b4"/>
<line x1="238.5" x2="238.5" y1="86.0" y2="100.0" stroke="#333" stroke-width="2.4"/>
<line x1="238.5" x2="238.5" y1="133.8" y2="180.3" stroke="#333" stroke-width="2.4"/>
<rect x="206.1" y="100.0" width="64.8" height="33.8" fill="#fff" stroke="#333" stroke-width="2.6"/>
<line x1="206.1" x2="270.8" y1="112.7" y2="112.7" stroke="#333" stroke-width="5"/>
<circle cx="238.5" cy="186.9" r="5.3" fill="#ff69b4"/>
<circle cx="238.5" cy="200.8" r="5.3" fill="#ff69b4"/>
<line x1="324.8" x2="324.8" y1="89.7" y2="121.8" stroke="#333" stroke-width="2.4"/>
<line x1="324.8" x2="324.8" y1="154.1" y2="167.7" stroke="#333" stroke-width="2.4"/>
<rect x="292.4" y="121.8" width="64.8" height="32.3" fill="#fff" stroke="#333" stroke-width="2.6"/>
<line x1="292.4" x2="357.2" y1="134.0" y2="134.0" stroke="#333" stroke-width="5"/>
<circle cx="324.8" cy="217.4" r="5.3" fill="#ff69b4"/>
<circle cx="324.8" cy="222.5" r="5.3" fill="#ff69b4"/>
<circle cx="324.8" cy="227.6" r="5.3" fill="#ff69b4"/>
<circle cx="324.8" cy="288.1" r="5.3" fill="#ff69b4"/>
<circle cx="324.8" cy="370.8" r="5.3" fill="#ff69b4"/>
<circle cx="324.8" cy="390.0" r="5.3" fill="#ff69b4"/>
<line x1="411.2" x2="411.2" y1="73.3" y2="111.1" stroke="#333" stroke-width="2.4"/>
<line x1="411.2" x2="411.2" y1="146.0" y2="192.8" stroke="#333" stroke-width="2.4"/>
<rect x="378.8" y="111.1" width="64.8" height="34.9" fill="#fff" stroke="#333" stroke-width="2.6"/>
<line x1="378.8" x2="443.5" y1="123.6" y2="123.6" stroke="#333" stroke-width="5"/>
<circle cx="411.2" cy="214.4" r="5.3" fill="#ff69b4"/>
<circle cx="411.2" cy="220.0" r="5.3" fill="#ff69b4"/>
<circle cx="411.2" cy="442.1" r="5.3" fill="#ff69b4"/>
<line x1="497.5" x2="497.5" y1="83.2" y2="99.8" stroke="#333" stroke-width="2.4"/>
<line x1="497.5" x2="497.5" y1="132.0" y2="175.4" stroke="#333" stroke-width="2.4"/>
<rect x="465.1" y="99.8" width="64.8" height="32.2" fill="#fff" stroke="#333" stroke-width="2.6"/>
<line x1="465.1" x2="529.9" y1="111.5" y2="111.5" stroke="#333" stroke-width="5"/>
<circle cx="497.5" cy="180.4" r="5.3" fill="#ff69b4"/>
<circle cx="497.5" cy="188.0" r="5.3" fill="#ff69b4"/>
<circle cx="497.5" cy="197.4" r="5.3" fill="#ff69b4"/>
<circle cx="497.5" cy="419.4" r="5.3" fill="#ff69b4"/>
<circle cx="497.5" cy="548.4" r="5.3" fill="#ff69b4"/>
<line x1="583.8" x2="583.8" y1="88.4" y2="99.0" stroke="#333" stroke-width="2.4"/>
<line x1="583.8" x2="583.8" y1="133.0" y2="178.5" stroke="#333" stroke-width="2.4"/>
<rect x="551.5" y="99.0" width="64.8" height="34.0" fill="#fff" stroke="#333" stroke-width="2.6"/>
<line x1="551.5" x2="616.2" y1="115.0" y2="115.0" stroke="#333" stroke-width="5"/>
<circle cx="583.8" cy="184.0" r="5.3" fill="#ff69b4"/>
<circle cx="583.8" cy="188.0" r="5.3" fill="#ff69b4"/>
<circle cx="583.8" cy="196.6" r="5.3" fill="#ff69b4"/>
<circle cx="583.8" cy="313.5" r="5.3" fill="#ff69b4"/>
<circle cx="583.8" cy="514.3" r="5.3" fill="#ff69b4"/>
<line x1="670.2" x2="670.2" y1="270.4" y2="366.4" stroke="#333" stroke-width="2.4"/>
<line x1="670.2" x2="670.2" y1="478.4" y2="498.0" stroke="#333" stroke-width="2.4"/>
<rect x="637.8" y="366.4" width="64.8" height="112.0" fill="#fff" stroke="#333" stroke-width="2.6"/>
<line x1="637.8" x2="702.6" y1="407.3" y2="407.3" stroke="#333" stroke-width="5"/>
<line x1="93.7" x2="100.3" y1="466.0" y2="466.0" stroke="#333" stroke-width="2.4"/>
<text x="88.0" y="473.5" text-anchor="end" font-family="Liberation Sans" font-size="20.5" fill="#4d4d4d">700</text>
<line x1="93.7" x2="100.3" y1="340.8" y2="340.8" stroke="#333" stroke-width="2.4"/>
<text x="88.0" y="348.3" text-anchor="end" font-family="Liberation Sans" font-size="20.5" fill="#4d4d4d">800</text>
<line x1="93.7" x2="100.3" y1="215.6" y2="215.6" stroke="#333" stroke-width="2.4"/>
<text x="88.0" y="223.1" text-anchor="end" font-family="Liberation Sans" font-size="20.5" fill="#4d4d4d">900</text>
<line x1="93.7" x2="100.3" y1="90.4" y2="90.4" stroke="#333" stroke-width="2.4"/>
<text x="88.0" y="97.9" text-anchor="end" font-family="Liberation Sans" font-size="20.5" fill="#4d4d4d">1000</text>
<line x1="152.1" x2="152.1" y1="572" y2="578" stroke="#333" stroke-width="2.4"/>
<text x="152.1" y="599" text-anchor="middle" font-family="Liberation Sans" font-size="20.5" fill="#4d4d4d">Sun</text>
<line x1="238.5" x2="238.5" y1="572" y2="578" stroke="#333" stroke-width="2.4"/>
<text x="238.5" y="599" text-anchor="middle" font-family="Liberation Sans" font-size="20.5" fill="#4d4d4d">Mon</text>
<line x1="324.8" x2="324.8" y1="572" y2="578" stroke="#333" stroke-width="2.4"/>
<text x="324.8" y="599" text-anchor="middle" font-family="Liberation Sans" font-size="20.5" fill="#4d4d4d">Tue</text>
<line x1="411.2" x2="411.2" y1="572" y2="578" stroke="#333" stroke-width="2.4"/>
<text x="411.2" y="599" text-anchor="middle" font-family="Liberation Sans" font-size="20.5" fill="#4d4d4d">Wed</text>
<line x1="497.5" x2="497.5" y1="572" y2="578" stroke="#333" stroke-width="2.4"/>
<text x="497.5" y="599" text-anchor="middle" font-family="Liberation Sans" font-size="20.5" fill="#4d4d4d">Thu</text>
<line x1="583.8" x2="583.8" y1="572" y2="578" stroke="#333" stroke-width="2.4"/>
<text x="583.8" y="599" text-anchor="middle" font-family="Liberation Sans" font-size="20.5" fill="#4d4d4d">Fri</text>
<line x1="670.2" x2="670.2" y1="572" y2="578" stroke="#333" stroke-width="2.4"/>
<text x="670.2" y="599" text-anchor="middle" font-family="Liberation Sans" font-size="20.5" fill="#4d4d4d">Sat</text>
<text x="411.2" y="628" text-anchor="middle" font-family="Liberation Sans" font-size="25.9" fill="#000">Weekday</text>
<text transform="translate(32.5,310.7) rotate(-90)" text-anchor="middle" font-family="Liberation Sans" font-size="25.5" fill="#000">Flights</text>
<text x="98.5" y="33" font-family="Liberation Sans" font-size="25.95" fill="#000">Number of 2013 New York Flights Each Weekday</text>
</svg>
</div>
</body></html>
